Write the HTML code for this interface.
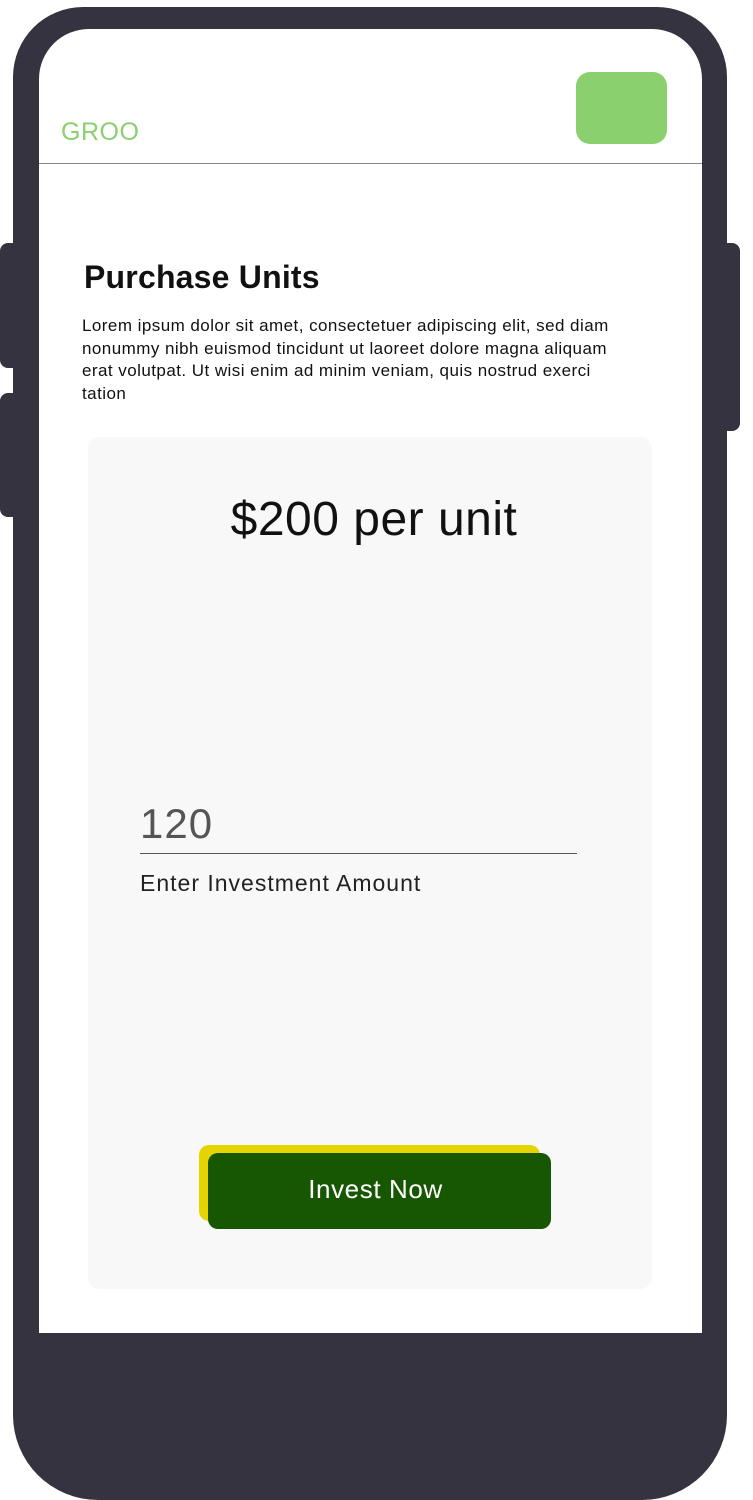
<!DOCTYPE html>
<html><head><style>
html,body{margin:0;width:753px;height:1500px;overflow:hidden}
body{background:#fff;position:relative;font-family:"Liberation Sans",sans-serif}
div{position:absolute;box-sizing:border-box}
</style></head><body>
<div style="left:0;top:243px;width:20px;height:125px;background:#35333f;border-radius:8px"></div>
<div style="left:0;top:393px;width:20px;height:124px;background:#35333f;border-radius:8px"></div>
<div style="left:720px;top:243px;width:20px;height:188px;background:#35333f;border-radius:8px"></div>
<div style="left:13px;top:7px;width:714px;height:1493px;background:#35333f;border-radius:70px 70px 85px 85px"></div>
<div style="left:39px;top:29px;width:663px;height:1304px;background:#fff;border-radius:50px 50px 0 0"></div>
<div style="left:61px;top:118px;color:#8ad06f;font-size:25px;letter-spacing:0.5px">GROO</div>
<div style="left:576px;top:72px;width:91px;height:72px;background:#8ad06f;border-radius:14px"></div>
<div style="left:39px;top:163px;width:663px;height:1px;background:#888"></div>
<div style="left:84px;top:259px;font-size:32px;font-weight:bold;color:#111;letter-spacing:0.2px">Purchase Units</div>
<div style="left:82px;top:315px;width:600px;font-size:17px;line-height:22.5px;color:#111;letter-spacing:0.45px;white-space:nowrap">Lorem ipsum dolor sit amet, consectetuer adipiscing elit, sed diam<br>nonummy nibh euismod tincidunt ut laoreet dolore magna aliquam<br>erat volutpat. Ut wisi enim ad minim veniam, quis nostrud exerci<br>tation</div>
<div style="left:88px;top:437px;width:564px;height:852px;background:#f8f8f8;border-radius:12px"></div>
<div style="left:88px;top:492px;width:564px;text-align:center;font-size:48px;color:#111;letter-spacing:0.5px;padding-left:8px">$200 per unit</div>
<div style="left:140px;top:800px;font-size:42px;color:#555;letter-spacing:1px">120</div>
<div style="left:140px;top:853px;width:437px;height:1px;background:#555"></div>
<div style="left:140px;top:870px;font-size:23px;color:#222;letter-spacing:1px">Enter Investment Amount</div>
<div style="left:199px;top:1145px;width:341px;height:76px;background:#e6d400;border-radius:10px"></div>
<div style="left:208px;top:1153px;width:343px;height:76px;background:#175702;border-radius:10px;color:#fff;font-size:26px;text-align:center;line-height:72px;letter-spacing:0.6px;padding-right:8px">Invest Now</div>
</body></html>
